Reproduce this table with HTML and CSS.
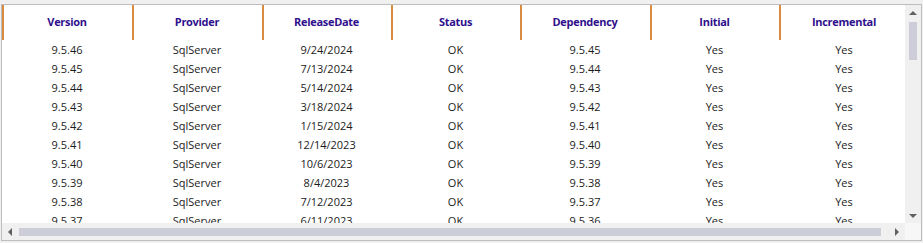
FILE: index.html
```html
<!DOCTYPE html>
<html>
<head>
<meta charset="utf-8">
<link rel="stylesheet" href="styles.css">
</head>
<body>
<div class="frame">
  <div class="viewport">
    <div class="table">
      <div class="row head">
        <div class="cell hc">Version</div>
        <div class="cell hc">Provider</div>
        <div class="cell hc">ReleaseDate</div>
        <div class="cell hc">Status</div>
        <div class="cell hc">Dependency</div>
        <div class="cell hc">Initial</div>
        <div class="cell hc">Incremental</div>
      </div>
      <div class="row"><div class="cell">9.5.46</div><div class="cell">SqlServer</div><div class="cell">9/24/2024</div><div class="cell">OK</div><div class="cell">9.5.45</div><div class="cell">Yes</div><div class="cell">Yes</div></div>
      <div class="row"><div class="cell">9.5.45</div><div class="cell">SqlServer</div><div class="cell">7/13/2024</div><div class="cell">OK</div><div class="cell">9.5.44</div><div class="cell">Yes</div><div class="cell">Yes</div></div>
      <div class="row"><div class="cell">9.5.44</div><div class="cell">SqlServer</div><div class="cell">5/14/2024</div><div class="cell">OK</div><div class="cell">9.5.43</div><div class="cell">Yes</div><div class="cell">Yes</div></div>
      <div class="row"><div class="cell">9.5.43</div><div class="cell">SqlServer</div><div class="cell">3/18/2024</div><div class="cell">OK</div><div class="cell">9.5.42</div><div class="cell">Yes</div><div class="cell">Yes</div></div>
      <div class="row"><div class="cell">9.5.42</div><div class="cell">SqlServer</div><div class="cell">1/15/2024</div><div class="cell">OK</div><div class="cell">9.5.41</div><div class="cell">Yes</div><div class="cell">Yes</div></div>
      <div class="row"><div class="cell">9.5.41</div><div class="cell">SqlServer</div><div class="cell">12/14/2023</div><div class="cell">OK</div><div class="cell">9.5.40</div><div class="cell">Yes</div><div class="cell">Yes</div></div>
      <div class="row"><div class="cell">9.5.40</div><div class="cell">SqlServer</div><div class="cell">10/6/2023</div><div class="cell">OK</div><div class="cell">9.5.39</div><div class="cell">Yes</div><div class="cell">Yes</div></div>
      <div class="row"><div class="cell">9.5.39</div><div class="cell">SqlServer</div><div class="cell">8/4/2023</div><div class="cell">OK</div><div class="cell">9.5.38</div><div class="cell">Yes</div><div class="cell">Yes</div></div>
      <div class="row"><div class="cell">9.5.38</div><div class="cell">SqlServer</div><div class="cell">7/12/2023</div><div class="cell">OK</div><div class="cell">9.5.37</div><div class="cell">Yes</div><div class="cell">Yes</div></div>
      <div class="row"><div class="cell">9.5.37</div><div class="cell">SqlServer</div><div class="cell">6/11/2023</div><div class="cell">OK</div><div class="cell">9.5.36</div><div class="cell">Yes</div><div class="cell">Yes</div></div>
    </div>
  </div>
  <div class="vscroll">
    <svg class="arrow" width="16" height="16" viewBox="0 0 16 16"><path d="M4 10 L8 6 L12 10 Z" fill="#606060"/></svg>
    <div class="vtrack"><div class="vthumb"></div></div>
    <svg class="arrow" width="16" height="16" viewBox="0 0 16 16"><path d="M4 7 L8 11 L12 7 Z" fill="#606060"/></svg>
  </div>
  <div class="hscroll">
    <svg class="arrow" width="16" height="16" viewBox="0 0 16 16"><path d="M10 4 L6 8 L10 12 Z" fill="#606060"/></svg>
    <div class="htrack"><div class="hthumb"></div></div>
    <svg class="arrow" width="16" height="16" viewBox="0 0 16 16"><path d="M6 4 L10 8 L6 12 Z" fill="#606060"/></svg>
  </div>
  <div class="corner"></div>
</div>
</body>
</html>
```
FILE: styles.css
```css
html, body {
  margin: 0;
  padding: 0;
  background: #f0f0f0;
}
body {
  padding: 4px 0 0 1px;
  font-family: "Open Sans", "Noto Sans", sans-serif;
  font-size: 11px;
  color: #1c1c1c;
}
.frame {
  width: 919px;
  border: 1px solid #bdbdbd;
  display: grid;
  grid-template-columns: 903px 16px;
  grid-template-rows: 218px 17px;
  background: #ffffff;
}
.viewport {
  overflow: hidden;
  background: #ffffff;
}
.table {
  width: 908px;
}
.row {
  display: grid;
  grid-template-columns: 130px 130px 129px 129px 130px 129px 130px;
  height: 19px;
  align-items: center;
}
.row.head {
  height: 35px;
}
.cell {
  text-align: center;
  white-space: nowrap;
  line-height: 19px;
}
.hc {
  height: 35px;
  line-height: 33px;
  border-left: 2px solid #d98b41;
  font-weight: 700;
  letter-spacing: -0.3px;
  color: #2f0f8c;
  padding-right: 2px;
}
.vscroll {
  background: #f0f0f0;
  display: flex;
  flex-direction: column;
  align-items: center;
  grid-row: 1;
  grid-column: 2;
}
.vtrack {
  flex: 1;
  width: 16px;
  display: flex;
  justify-content: center;
}
.vthumb {
  width: 8px;
  height: 38px;
  margin-top: 1px;
  background: #cdcdd9;
}
.hscroll {
  background: #f0f0f0;
  display: flex;
  align-items: center;
  grid-row: 2;
  grid-column: 1;
}
.htrack {
  flex: 1;
  height: 17px;
  display: flex;
  align-items: center;
}
.hthumb {
  height: 8px;
  width: 862px;
  margin-left: 1px;
  background: #cdcdd9;
}
.arrow {
  display: block;
  flex: none;
}
.corner {
  background: #f7f7f7;
  grid-row: 2;
  grid-column: 2;
}
```
